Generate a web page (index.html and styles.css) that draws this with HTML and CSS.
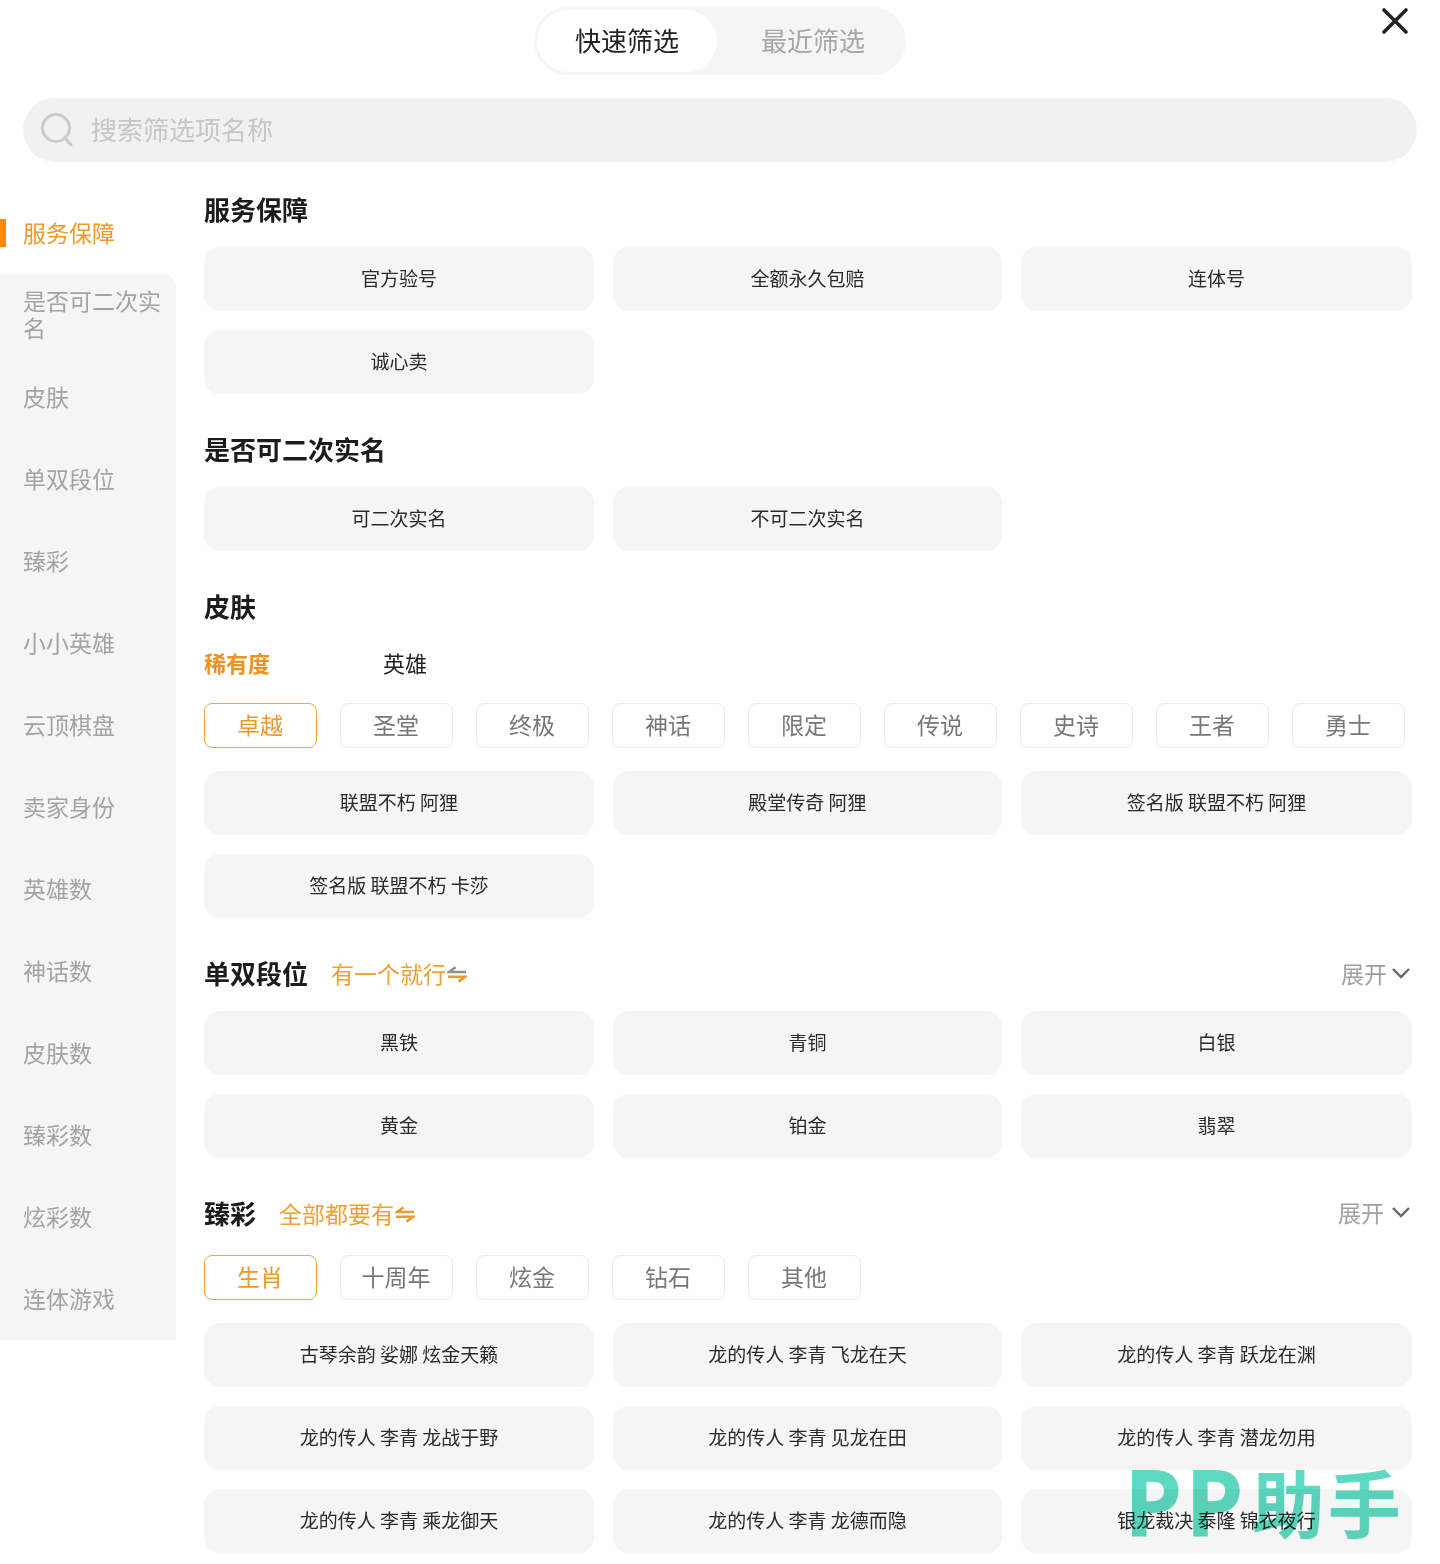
FILE: index.html
```html
<!DOCTYPE html>
<html lang="zh-CN">
<head>
<meta charset="utf-8">
<title>快速筛选</title>
<link rel="stylesheet" href="styles.css">
</head>
<body>
<div class="page">
  <header class="top">
    <div class="tabs">
      <div class="tab tab-on">快速筛选</div>
      <div class="tab">最近筛选</div>
    </div>
    <svg class="close" width="30" height="30" viewBox="0 0 30 30"><path d="M4 4L26 26M26 4L4 26" fill="none" stroke="#222" stroke-width="3.6" stroke-linecap="round"/></svg>
  </header>

  <div class="search">
    <svg class="search-icon" width="34" height="34" viewBox="0 0 34 34"><circle cx="16" cy="15" r="13.5" fill="none" stroke="#c8ccd1" stroke-width="3"/><path d="M25 25L31 32" fill="none" stroke="#c8ccd1" stroke-width="3" stroke-linecap="round"/></svg>
    <span class="search-text">搜索筛选项名称</span>
  </div>

  <div class="body">
    <nav class="side">
      <div class="side-item side-on">服务保障</div>
      <div class="side-rest">
        <div class="side-item">是否可二次实名</div>
        <div class="side-item">皮肤</div>
        <div class="side-item">单双段位</div>
        <div class="side-item">臻彩</div>
        <div class="side-item">小小英雄</div>
        <div class="side-item">云顶棋盘</div>
        <div class="side-item">卖家身份</div>
        <div class="side-item">英雄数</div>
        <div class="side-item">神话数</div>
        <div class="side-item">皮肤数</div>
        <div class="side-item">臻彩数</div>
        <div class="side-item">炫彩数</div>
        <div class="side-item">连体游戏</div>
      </div>
    </nav>

    <main class="main">
      <section class="sec">
        <div class="head"><h2 class="title">服务保障</h2></div>
        <div class="grid">
          <div class="btn">官方验号</div>
          <div class="btn">全额永久包赔</div>
          <div class="btn">连体号</div>
          <div class="btn">诚心卖</div>
        </div>
      </section>

      <section class="sec">
        <div class="head"><h2 class="title">是否可二次实名</h2></div>
        <div class="grid">
          <div class="btn">可二次实名</div>
          <div class="btn">不可二次实名</div>
        </div>
      </section>

      <section class="sec">
        <div class="head"><h2 class="title">皮肤</h2></div>
        <div class="subtabs">
          <span class="subtab subtab-on">稀有度</span>
          <span class="subtab">英雄</span>
        </div>
        <div class="chips">
          <div class="chip chip-on">卓越</div>
          <div class="chip">圣堂</div>
          <div class="chip">终极</div>
          <div class="chip">神话</div>
          <div class="chip">限定</div>
          <div class="chip">传说</div>
          <div class="chip">史诗</div>
          <div class="chip">王者</div>
          <div class="chip">勇士</div>
        </div>
        <div class="grid">
          <div class="btn">联盟不朽 阿狸</div>
          <div class="btn">殿堂传奇 阿狸</div>
          <div class="btn">签名版 联盟不朽 阿狸</div>
          <div class="btn">签名版 联盟不朽 卡莎</div>
        </div>
      </section>

      <section class="sec">
        <div class="head">
          <h2 class="title">单双段位</h2>
          <span class="note">有一个就行</span>
          <svg class="swap" width="21" height="18" viewBox="0 0 21 18"><path d="M20 7H2L9 2" fill="none" stroke="#8f8f8f" stroke-width="2.6"/><path d="M1 12H19L12 17" fill="none" stroke="#f0982a" stroke-width="2.6"/></svg>
          <span class="more">展开<svg class="chev" width="20" height="12" viewBox="0 0 20 12"><path d="M2 2L10 10L18 2" fill="none" stroke="#666" stroke-width="2.4"/></svg></span>
        </div>
        <div class="grid">
          <div class="btn">黑铁</div>
          <div class="btn">青铜</div>
          <div class="btn">白银</div>
          <div class="btn">黄金</div>
          <div class="btn">铂金</div>
          <div class="btn">翡翠</div>
        </div>
      </section>

      <section class="sec">
        <div class="head head-chips">
          <h2 class="title">臻彩</h2>
          <span class="note">全部都要有</span>
          <svg class="swap" width="21" height="18" viewBox="0 0 21 18"><path d="M20 7H2L9 2" fill="none" stroke="#f0982a" stroke-width="2.6"/><path d="M1 12H19L12 17" fill="none" stroke="#f0982a" stroke-width="2.6"/></svg>
          <span class="more more-up">展开<svg class="chev" width="20" height="12" viewBox="0 0 20 12"><path d="M2 2L10 10L18 2" fill="none" stroke="#666" stroke-width="2.4"/></svg></span>
        </div>
        <div class="chips">
          <div class="chip chip-on">生肖</div>
          <div class="chip">十周年</div>
          <div class="chip">炫金</div>
          <div class="chip">钻石</div>
          <div class="chip">其他</div>
        </div>
        <div class="grid">
          <div class="btn">古琴余韵 娑娜 炫金天籁</div>
          <div class="btn">龙的传人 李青 飞龙在天</div>
          <div class="btn">龙的传人 李青 跃龙在渊</div>
          <div class="btn">龙的传人 李青 龙战于野</div>
          <div class="btn">龙的传人 李青 见龙在田</div>
          <div class="btn">龙的传人 李青 潜龙勿用</div>
          <div class="btn">龙的传人 李青 乘龙御天</div>
          <div class="btn">龙的传人 李青 龙德而隐</div>
          <div class="btn">银龙裁决 泰隆 锦衣夜行</div>
        </div>
      </section>
    </main>
  </div>

  <div class="mark"><span class="mark-p">PP</span><span class="mark-cn">助手</span></div>
</div>
</body>
</html>
```

FILE: styles.css
```css
* { box-sizing: border-box; }
html, body { margin: 0; padding: 0; background: #fff; }
body { font-family: "Noto Sans CJK SC", "Noto Sans", sans-serif; color: #222; }

.page { position: relative; width: 1440px; height: 1564px; overflow: hidden; }

.top { display: flex; justify-content: center; padding-top: 7px; }
.tabs { display: flex; gap: 6px; width: 372px; height: 68px; padding: 3px; border-radius: 34px; background: #f5f5f5; }
.tab { width: 180px; height: 62px; padding-bottom: 4px; border-radius: 31px; display: flex; align-items: center; justify-content: center; font-size: 26px; color: #a6a6a6; }
.tab-on { background: #fff; color: #222; }
.close { position: absolute; left: 1380px; top: 6px; }

.search { display: flex; align-items: center; margin: 23px 23px 0; height: 64px; padding-left: 17px; border-radius: 32px; background: #f1f1f1; }
.search-icon { flex: none; }
.search-text { margin: 0 0 4px 17px; font-size: 26px; color: #c6c6c6; }

.body { display: flex; align-items: flex-start; margin-top: 30px; }

.side { flex: none; width: 176px; }
.side-rest { background: #f5f5f5; border-top-right-radius: 14px; }
.side-item { display: flex; align-items: center; height: 82px; padding: 0 15px 2px 23px; font-size: 23px; line-height: 27px; color: #a3a3a3; }
.side-on { position: relative; color: #f0982a; }
.side-on::before { content: ""; position: absolute; left: 0; top: 27px; width: 6px; height: 28px; background: #ff8a00; }

.main { flex: none; width: 1208px; margin-left: 28px; }
.sec { margin-bottom: 38px; }

.head { display: flex; align-items: center; height: 36px; margin-bottom: 19px; }
.head-chips { margin-bottom: 23px; }
.title { margin: 0 0 2px; font-size: 26px; line-height: 36px; font-weight: 700; color: #1c1c1c; }
.note { margin: 0 0 2px 23px; font-size: 23px; color: #f0a02f; }
.swap { width: 20px; margin: 0 0 1px 1px; flex: none; }
.more { display: flex; align-items: center; gap: 4px; margin: 0 1px 2px auto; font-size: 23px; color: #a0a0a0; }
.more-up { margin-top: -4px; margin-bottom: 0; gap: 7px; }
.chev { flex: none; }

.grid { display: grid; grid-template-columns: 390px 389px 391px; gap: 19px; }
.btn { display: flex; align-items: center; justify-content: center; height: 64px; padding-bottom: 4px; border-radius: 16px; background: #f5f5f5; font-size: 19px; color: #2a2a2a; white-space: pre; }

.subtabs { display: flex; height: 38px; align-items: center; padding-bottom: 3px; margin-bottom: 21px; }
.subtab { width: 179px; font-size: 22px; color: #222; }
.subtab-on { font-weight: 700; color: #f0901e; }

.chips { display: flex; gap: 23px; width: 1201px; overflow: hidden; margin-bottom: 23px; }
.chip { flex: none; display: flex; align-items: center; justify-content: center; width: 113px; height: 45px; padding: 0 1px 4px 0; border: 1px solid #eee; border-radius: 8px; font-size: 23px; color: #777; }
.chip-on { border-color: #f0a53d; color: #f0982a; }

.mark { position: absolute; left: 1124px; top: 1441px; display: flex; align-items: center; height: 120px; line-height: 1.2; color: #5dd9c1; mix-blend-mode: multiply; pointer-events: none; }
.mark-p { font-family: "Noto Sans", sans-serif; font-size: 94px; font-weight: 700; letter-spacing: 3px; }
.mark-cn { margin-left: 5px; font-size: 73px; font-weight: 700; letter-spacing: 3px; }
```
